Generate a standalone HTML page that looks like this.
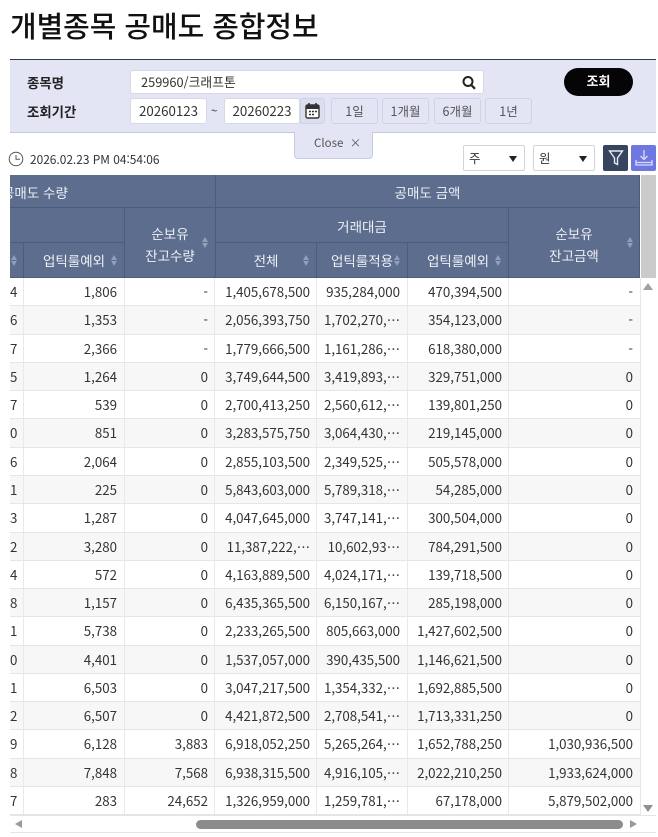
<!DOCTYPE html>
<html lang="ko"><head><meta charset="utf-8"><style>
*{box-sizing:border-box}
html,body{margin:0;padding:0;background:#fff;width:658px;height:837px;overflow:hidden}
body{position:relative;font-family:"Noto Sans CJK KR","Liberation Sans",sans-serif;color:#222;font-size:13px}
.a{position:absolute}
h1{position:absolute;left:10px;top:3px;margin:0;font-size:28.9px;font-weight:500;line-height:44px;color:#111;white-space:nowrap}
.panel{position:absolute;left:10px;top:59px;width:646px;height:74px;background:#e3e5f5;border-top:1.5px solid #333a44;border-bottom:1px solid #c5c8d8}
.lbl{position:absolute;font-weight:700;font-size:13.4px;line-height:20px;color:#222}
.inp{position:absolute;background:#fff;border:1px solid #d6d8e6;border-radius:3px;line-height:24px;color:#333}
.btn{position:absolute;top:98px;height:26px;background:#e3e5f5;border:1.5px solid #d0d3e3;border-radius:3px;text-align:center;line-height:23px;color:#555;font-size:12.5px}
.close{position:absolute;left:294px;top:132px;width:79px;height:27px;background:#e3e5f5;border:1px solid #c8cbdc;border-top:0;border-radius:0 0 4px 4px;line-height:22px;font-size:11.5px;color:#555;padding-left:19px;white-space:nowrap}
.sel{position:absolute;top:145px;height:26px;background:#fff;border:1px solid #d4d4d4;border-radius:2px;line-height:24px;padding-left:5px;color:#333;font-size:12.5px}
.sel:after{content:"";position:absolute;right:7px;top:10px;border-left:4.5px solid transparent;border-right:4.5px solid transparent;border-top:6px solid #222}
.hd{position:absolute;background:#5c6d8e;color:#eef0f5;text-align:center;border-right:1px solid #4c5c7c;border-bottom:1px solid #4c5c7c;font-size:13.5px;display:flex;align-items:center;justify-content:center;white-space:nowrap;line-height:30px;padding-top:1px}
.hd.m{line-height:22px;padding-top:2px}
.s{position:absolute;width:7px;height:14px}
.s:before,.s:after{content:"";position:absolute;left:0;border-left:3.5px solid transparent;border-right:3.5px solid transparent}
.s:before{top:1px;border-bottom:5px solid #8ea0bd}
.s:after{top:7px;border-top:5px solid #8ea0bd}
#rows{position:absolute;left:10px;top:278px;width:631px;height:537px;overflow:hidden;border-right:1px solid #e6e6e6}
.r{position:absolute;left:0;width:630px;height:28.28px;display:flex;border-bottom:1px solid #e6e6e6;background:#fff}
.r:nth-child(even){background:#f7f7f7}
.r i{font-style:normal;display:block;height:100%;border-right:1px solid #e9e9e9;text-align:right;padding-right:6px;line-height:27px;font-size:13.3px;color:#333;white-space:nowrap;overflow:hidden}
.r i:nth-child(1){width:14px;padding-right:0;text-align:left}
.r i:nth-child(2){width:101px;padding-right:7px}
.r i:nth-child(3){width:90px}
.r i:nth-child(4){width:102px}
.r i:nth-child(5){width:91px;padding-right:7px}
.r i:nth-child(6){width:101px}
.r i:nth-child(7){width:131px;border-right:0;padding-right:7px}
</style></head><body>
<h1>개별종목 공매도 종합정보</h1>
<div class="panel"></div>
<div class="lbl" style="left:27px;top:72px">종목명</div>
<div class="lbl" style="left:27px;top:101px">조회기간</div>
<div class="inp" style="left:130px;top:70px;width:354px;height:24px;padding-left:10px;line-height:21px;font-size:12.8px">259960/크래프톤</div>
<svg class="a" style="left:461px;top:75px" width="16" height="15" viewBox="0 0 16 15"><circle cx="7" cy="6.5" r="4.5" fill="none" stroke="#222" stroke-width="2"/><path d="M10.3 10l3.7 3.8" stroke="#222" stroke-width="2.2"/></svg>
<div class="a" style="left:564px;top:68px;width:69px;height:28px;background:#050508;border-radius:14px;color:#fff;text-align:center;font-size:13px;font-weight:700;line-height:26px">조회</div>
<div class="inp" style="left:130px;top:98px;width:77px;height:26px;text-align:center;font-size:13.3px">20260123</div>
<div class="a" style="left:211px;top:102px;font-size:12px;line-height:18px;color:#444">~</div>
<div class="inp" style="left:224px;top:98px;width:76px;height:26px;text-align:center;font-size:13.3px">20260223</div>
<div class="a" style="left:300px;top:98px;width:25px;height:26px;background:#dcdeee;border:1px solid #d0d3e3;border-radius:0 3px 3px 0"></div>
<svg class="a" style="left:305px;top:102px" width="15" height="17" viewBox="0 0 15 17"><rect x="1" y="3" width="13" height="13" rx="1.5" fill="#fff" stroke="#333" stroke-width="1.4"/><rect x="1" y="3" width="13" height="4" fill="#333"/><path d="M4 1v3M11 1v3" stroke="#333" stroke-width="1.6"/><path d="M4 9.5h2M7 9.5h2M10 9.5h2M4 12.5h2M7 12.5h2" stroke="#333" stroke-width="1.4"/></svg>
<div class="btn" style="left:331px;width:47px">1일</div>
<div class="btn" style="left:382px;width:47px">1개월</div>
<div class="btn" style="left:434px;width:47px">6개월</div>
<div class="btn" style="left:485px;width:47px">1년</div>
<div class="close">Close &nbsp;×</div>
<svg class="a" style="left:8px;top:151px" width="16" height="16" viewBox="0 0 16 16"><circle cx="8" cy="8" r="6.8" fill="none" stroke="#555" stroke-width="1"/><path d="M8 4v4.2h4" fill="none" stroke="#555" stroke-width="1"/></svg>
<div class="a" style="left:30px;top:151px;font-size:11.9px;line-height:18px;color:#333;white-space:nowrap">2026.02.23 PM 04:54:06</div>
<div class="sel" style="left:463px;width:62px">주</div>
<div class="sel" style="left:533px;width:62px">원</div>
<div class="a" style="left:603px;top:145px;width:25px;height:26px;background:#36445e;border-radius:2px"></div>
<svg class="a" style="left:608px;top:149px" width="16" height="18" viewBox="0 0 16 18"><path d="M1.5 2h13L9.5 9v6.5L6.5 14V9z" fill="none" stroke="#e8ebf2" stroke-width="1.4"/></svg>
<div class="a" style="left:631px;top:145px;width:25px;height:26px;background:#6f78e0;border-radius:2px"></div>
<svg class="a" style="left:634px;top:148px" width="20" height="20" viewBox="0 0 20 20"><path d="M10 2v9M6.5 8l3.5 3.5L13.5 8M2 12v5h16v-5M2 14.5h16" fill="none" stroke="#d8dcfa" stroke-width="1.3"/></svg>

<div class="hd" style="left:10px;top:175px;width:206px;height:33px;justify-content:flex-start;overflow:hidden"><span style="margin-left:-8px">공매도 수량</span></div>
<div class="hd" style="left:216px;top:175px;width:424px;height:33px">공매도 금액</div>
<div class="hd" style="left:10px;top:208px;width:115px;height:35px"></div>
<div class="hd m" style="left:125px;top:208px;width:91px;height:70px"><span>순보유<br>잔고수량</span></div>
<div class="hd" style="left:216px;top:208px;width:293px;height:35px">거래대금</div>
<div class="hd m" style="left:509px;top:208px;width:131px;height:70px"><span>순보유<br>잔고금액</span></div>
<div class="hd" style="left:10px;top:243px;width:14px;height:35px"></div>
<div class="hd" style="left:24px;top:243px;width:101px;height:35px;padding-top:0">업틱룰예외</div>
<div class="hd" style="left:216px;top:243px;width:101px;height:35px;padding-top:0">전체</div>
<div class="hd" style="left:317px;top:243px;width:91px;height:35px;padding-top:0">업틱룰적용</div>
<div class="hd" style="left:408px;top:243px;width:101px;height:35px;padding-top:0">업틱룰예외</div>
<div class="s" style="left:11px;top:254px"></div>
<div class="s" style="left:111px;top:254px"></div>
<div class="s" style="left:202px;top:236px"></div>
<div class="s" style="left:303px;top:254px"></div>
<div class="s" style="left:394px;top:254px"></div>
<div class="s" style="left:495px;top:254px"></div>
<div class="s" style="left:627px;top:236px"></div>

<div id="rows">
<div class="r" style="top:0"><i>4</i><i>1,806</i><i>-</i><i>1,405,678,500</i><i>935,284,000</i><i>470,394,500</i><i>-</i></div>
<div class="r" style="top:28.28px"><i>6</i><i>1,353</i><i>-</i><i>2,056,393,750</i><i>1,702,270,⋯</i><i>354,123,000</i><i>-</i></div>
<div class="r" style="top:56.56px"><i>7</i><i>2,366</i><i>-</i><i>1,779,666,500</i><i>1,161,286,⋯</i><i>618,380,000</i><i>-</i></div>
<div class="r" style="top:84.84px"><i>5</i><i>1,264</i><i>0</i><i>3,749,644,500</i><i>3,419,893,⋯</i><i>329,751,000</i><i>0</i></div>
<div class="r" style="top:113.12px"><i>7</i><i>539</i><i>0</i><i>2,700,413,250</i><i>2,560,612,⋯</i><i>139,801,250</i><i>0</i></div>
<div class="r" style="top:141.4px"><i>0</i><i>851</i><i>0</i><i>3,283,575,750</i><i>3,064,430,⋯</i><i>219,145,000</i><i>0</i></div>
<div class="r" style="top:169.68px"><i>6</i><i>2,064</i><i>0</i><i>2,855,103,500</i><i>2,349,525,⋯</i><i>505,578,000</i><i>0</i></div>
<div class="r" style="top:197.96px"><i>1</i><i>225</i><i>0</i><i>5,843,603,000</i><i>5,789,318,⋯</i><i>54,285,000</i><i>0</i></div>
<div class="r" style="top:226.24px"><i>3</i><i>1,287</i><i>0</i><i>4,047,645,000</i><i>3,747,141,⋯</i><i>300,504,000</i><i>0</i></div>
<div class="r" style="top:254.52px"><i>2</i><i>3,280</i><i>0</i><i>11,387,222,⋯</i><i>10,602,93⋯</i><i>784,291,500</i><i>0</i></div>
<div class="r" style="top:282.8px"><i>4</i><i>572</i><i>0</i><i>4,163,889,500</i><i>4,024,171,⋯</i><i>139,718,500</i><i>0</i></div>
<div class="r" style="top:311.08px"><i>8</i><i>1,157</i><i>0</i><i>6,435,365,500</i><i>6,150,167,⋯</i><i>285,198,000</i><i>0</i></div>
<div class="r" style="top:339.36px"><i>1</i><i>5,738</i><i>0</i><i>2,233,265,500</i><i>805,663,000</i><i>1,427,602,500</i><i>0</i></div>
<div class="r" style="top:367.64px"><i>0</i><i>4,401</i><i>0</i><i>1,537,057,000</i><i>390,435,500</i><i>1,146,621,500</i><i>0</i></div>
<div class="r" style="top:395.92px"><i>1</i><i>6,503</i><i>0</i><i>3,047,217,500</i><i>1,354,332,⋯</i><i>1,692,885,500</i><i>0</i></div>
<div class="r" style="top:424.2px"><i>2</i><i>6,507</i><i>0</i><i>4,421,872,500</i><i>2,708,541,⋯</i><i>1,713,331,250</i><i>0</i></div>
<div class="r" style="top:452.48px"><i>9</i><i>6,128</i><i>3,883</i><i>6,918,052,250</i><i>5,265,264,⋯</i><i>1,652,788,250</i><i>1,030,936,500</i></div>
<div class="r" style="top:480.76px"><i>8</i><i>7,848</i><i>7,568</i><i>6,938,315,500</i><i>4,916,105,⋯</i><i>2,022,210,250</i><i>1,933,624,000</i></div>
<div class="r" style="top:509.04px"><i>7</i><i>283</i><i>24,652</i><i>1,326,959,000</i><i>1,259,781,⋯</i><i>67,178,000</i><i>5,879,502,000</i></div>
</div>

<div class="a" style="left:641px;top:175px;width:15px;height:103px;background:#cbcbcb"></div>
<div class="a" style="left:643px;top:283px;border-left:5px solid transparent;border-right:5px solid transparent;border-bottom:7px solid #a0a0a0"></div>
<div class="a" style="left:643px;top:805px;border-left:5px solid transparent;border-right:5px solid transparent;border-top:7px solid #909090"></div>
<div class="a" style="left:10px;top:815px;width:646px;height:18px;background:#fff;border-top:1px solid #e4e4e4;border-bottom:1px solid #e4e4e4"></div>
<div class="a" style="left:15px;top:820px;border-top:4.5px solid transparent;border-bottom:4.5px solid transparent;border-right:7px solid #999"></div>
<div class="a" style="left:630px;top:820px;border-top:4.5px solid transparent;border-bottom:4.5px solid transparent;border-left:7px solid #999"></div>
<div class="a" style="left:196px;top:820px;width:427px;height:9px;background:#8c8c8c;border-radius:5px"></div>
</body></html>
